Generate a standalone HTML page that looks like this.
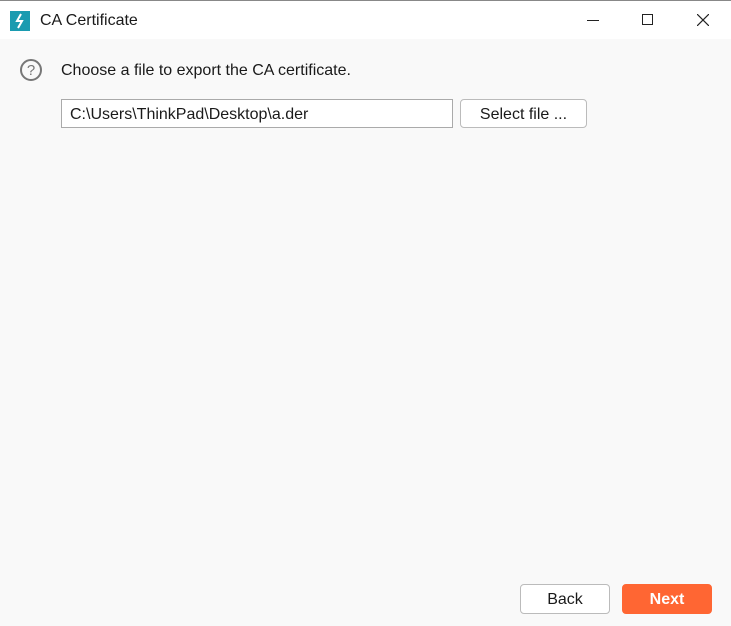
<!DOCTYPE html>
<html><head><style>
body{margin:0;width:731px;height:626px;background:#f9f9f9;font-family:"Liberation Sans",sans-serif;position:relative;overflow:hidden;color:#1a1a1a}
.tb{position:absolute;left:0;top:0;width:731px;height:38px;background:#fff;border-top:1px solid #888}
.ic{position:absolute;left:10px;top:10px;width:20px;height:20px;background:#1a9bb0}
.t{position:absolute;left:40px;top:11px;font-size:16px}
.q{position:absolute;left:20px;top:59px;width:22px;height:22px;border:2px solid #777;border-radius:50%;box-sizing:border-box;text-align:center;font-size:15px;color:#777;line-height:19px}
.lbl{position:absolute;left:61px;top:62px;font-size:16px}
.in{position:absolute;left:61px;top:99px;width:392px;height:29px;border:1px solid #aaa;background:#fff;box-sizing:border-box;font-size:16px;padding:6px 8px 0}
.btn{position:absolute;border:1px solid #bbb;background:#fff;border-radius:4px;box-sizing:border-box;text-align:center;font-size:16px}
</style></head><body>
<div class="tb">
<div class="ic"><svg width="20" height="20"><path d="M11 3 L7 10 L12 10 L8 17" stroke="#fff" stroke-width="2" fill="none"/></svg></div>
<div class="t">CA Certificate</div>
<div style="position:absolute;left:587px;top:19px;width:12px;height:1px;background:#222"></div>
<div style="position:absolute;left:642px;top:13px;width:11px;height:11px;border:1px solid #222;box-sizing:border-box"></div>
<svg style="position:absolute;left:697px;top:13px" width="12" height="12"><path d="M0 0L12 12M12 0L0 12" stroke="#222" stroke-width="1.2"/></svg>
</div>
<div class="q">?</div>
<div class="lbl">Choose a file to export the CA certificate.</div>
<div class="in">C:\Users\ThinkPad\Desktop\a.der</div>
<div class="btn" style="left:460px;top:99px;width:127px;height:29px;line-height:29px">Select file ...</div>
<div class="btn" style="left:520px;top:584px;width:90px;height:30px;line-height:30px">Back</div>
<div class="btn" style="left:622px;top:584px;width:90px;height:30px;line-height:30px;background:#ff6633;border-color:#ff6633;color:#fff;font-weight:bold">Next</div>
</body></html>
